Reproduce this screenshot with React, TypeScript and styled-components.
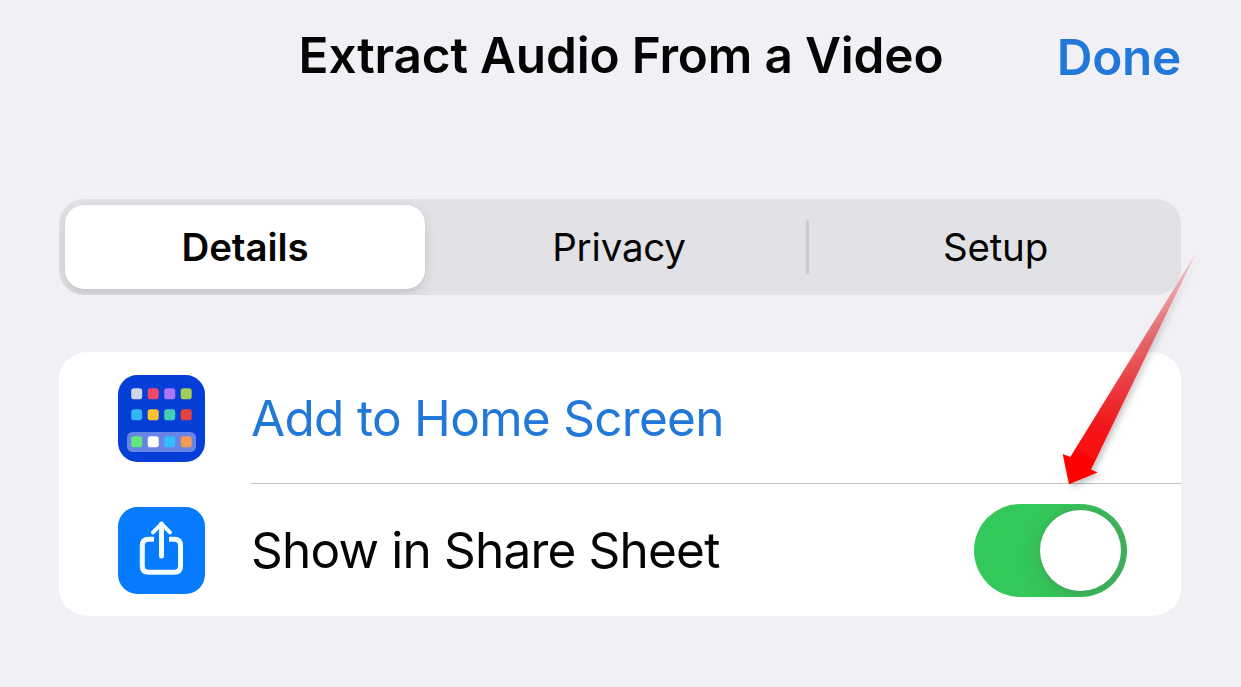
import React from 'react'
import styled, { createGlobalStyle } from 'styled-components'

const color = {
  background: '#f1f0f5',
  surface: '#ffffff',
  track: '#e2e1e6',
  separator: '#c2c2c4',
  text: '#050505',
  link: '#2278d8',
  green: '#34c759',
}

const GlobalStyle = createGlobalStyle`
  * {
    box-sizing: border-box;
  }

  body {
    margin: 0;
    background-color: ${color.background};
    font-family: Inter, 'Liberation Sans', sans-serif;
    color: ${color.text};
  }

  button {
    margin: 0;
    padding: 0;
    border: 0;
    background: none;
    font: inherit;
    color: inherit;
  }
`

const Wrapper = styled.div`
  position: relative;
  width: 1241px;
  height: 687px;
  padding: 0 60px 0 59px;
  background-color: ${color.background};
  overflow: hidden;
`

const Header = styled.header`
  display: grid;
  grid-template-columns: 200px 1fr 200px;
  align-items: center;
  height: 110px;
  margin-bottom: 89px;
  white-space: nowrap;
`

const Title = styled.h1`
  grid-column: 2;
  justify-self: center;
  margin: 0;
  padding-left: 2px;
  font-size: 49.5px;
  font-weight: 600;
  line-height: 60px;
  letter-spacing: -0.18px;
`

const DoneButton = styled.button`
  justify-self: end;
  padding-top: 4px;
  font-size: 49.5px;
  font-weight: 600;
  line-height: 60px;
  letter-spacing: -0.3px;
  color: ${color.link};
`

const Segments = styled.div`
  display: grid;
  grid-template-columns: 360px 388px 1fr;
  height: 96px;
  padding: 6px 3px 6px 6px;
  border-radius: 25px;
  background-color: ${color.track};
  overflow: hidden;
`

const Segment = styled.button<{ $selected?: boolean; $divided?: boolean }>`
  display: flex;
  justify-content: center;
  align-items: center;
  position: relative;
  border-radius: 19px;
  font-size: 38.5px;
  font-weight: ${({ $selected }) => ($selected ? 590 : 420)};
  letter-spacing: ${({ $selected }) => ($selected ? '-0.1px' : '-0.2px')};
  background-color: ${({ $selected }) => ($selected ? color.surface : 'transparent')};
  box-shadow: ${({ $selected }) =>
    $selected ? '0 4px 12px rgba(0, 0, 0, 0.12), 0 4px 2px rgba(0, 0, 0, 0.02)' : 'none'};

  &::after {
    content: '';
    display: ${({ $divided }) => ($divided ? 'block' : 'none')};
    position: absolute;
    top: 15px;
    right: 4px;
    width: 3px;
    height: 54px;
    border-radius: 2px;
    background-color: #cacace;
  }
`

const Card = styled.ul`
  margin: 57px 0 0;
  padding: 0;
  border-radius: 28px;
  background-color: ${color.surface};
  list-style: none;
`

const Row = styled.li`
  display: flex;
  align-items: center;
  height: 132px;
  padding-left: 59px;

  svg {
    flex: none;
  }
`

const RowBody = styled.div<{ $separator?: boolean }>`
  display: flex;
  justify-content: space-between;
  align-items: center;
  flex-grow: 1;
  height: 100%;
  margin-left: 46px;
  padding-right: 54px;
  border-bottom: ${({ $separator }) => ($separator ? `1px solid ${color.separator}` : '0')};
`

const Label = styled.span<{ $link?: boolean }>`
  font-size: 49.5px;
  font-weight: 420;
  line-height: 60px;
  letter-spacing: ${({ $link }) => ($link ? '-0.7px' : '-0.8px')};
  white-space: nowrap;
  color: ${({ $link }) => ($link ? color.link : color.text)};
`

const Toggle = styled.button`
  display: flex;
  justify-content: flex-end;
  width: 153px;
  height: 93px;
  padding: 6px;
  border-radius: 47px;
  background-color: ${color.green};
  overflow: hidden;
`

const Knob = styled.span`
  width: 81px;
  height: 81px;
  border-radius: 50%;
  background-color: ${color.surface};
  box-shadow: 0 6px 20px rgba(70, 70, 70, 0.16), 4px 0 5px 4px rgba(110, 110, 110, 0.2);
`

const Pointer = styled.svg`
  position: absolute;
  top: 240px;
  left: 1040px;
  pointer-events: none;
`

const apps = [
  ['#d2d6ea', '#ed4a6b', '#ad75fb', '#a4cf57'],
  ['#31b5f5', '#fdc130', '#42cfb3', '#e6403f'],
  ['#62e878', '#ffffff', '#34bdfd', '#f49a55'],
]
const appRows = [14, 35, 62]

const HomeScreenIcon = () => (
  <svg width="87" height="87" viewBox="0 0 87 87">
    <rect width="87" height="87" rx="19.5" fill="#063fd8" />
    <rect x="9" y="57" width="69" height="20" rx="5.5" fill="#6685e4" />
    {apps.map((row, y) =>
      row.map((fill, x) => (
        <rect
          key={fill}
          x={13.2 + x * 16.5}
          y={appRows[y] - 0.8}
          width="11"
          height="11"
          rx="2.8"
          fill={fill}
        />
      ))
    )}
  </svg>
)

const ShareIcon = () => (
  <svg width="87" height="87" viewBox="0 0 87 87">
    <rect width="87" height="87" rx="19.5" fill="#067bff" />
    <g fill="none" stroke="#f2fcff" strokeWidth="5">
      <path d="M36 32.2H30.5Q24.3 32.2 24.3 38.4V59.1Q24.3 65.3 30.5 65.3H56.3Q62.5 65.3 62.5 59.1V38.4Q62.5 32.2 56.3 32.2H51" />
      <path d="M43.5 49V17" strokeLinecap="round" />
      <path d="M35 25.3L43.5 16.8L52 25.3" strokeWidth="4" strokeLinecap="round" strokeLinejoin="round" />
    </g>
  </svg>
)

const Arrow = () => (
  <Pointer width="201" height="260" viewBox="0 0 201 260">
    <defs>
      <linearGradient id="fade" gradientUnits="userSpaceOnUse" x1="155" y1="16" x2="36" y2="232">
        <stop offset="0" stopColor="#df2a30" stopOpacity="0.2" />
        <stop offset="0.4" stopColor="#e22329" stopOpacity="0.65" />
        <stop offset="0.75" stopColor="#ef1417" stopOpacity="0.95" />
        <stop offset="1" stopColor="#ff0000" />
      </linearGradient>
      <filter id="shadow" x="-20%" y="-20%" width="140%" height="140%">
        <feDropShadow dx="2.5" dy="2.5" stdDeviation="3" floodColor="#000" floodOpacity="0.26" />
      </filter>
    </defs>
    <path
      d="M156 13L51 229.5L57.5 232.5L29 244.3L22.7 214L30.3 217Z"
      fill="url(#fade)"
      filter="url(#shadow)"
    />
  </Pointer>
)

const App = () => (
  <>
    <GlobalStyle />
    <Wrapper>
      <Header>
        <Title>Extract Audio From a Video</Title>
        <DoneButton>Done</DoneButton>
      </Header>

      <Segments>
        <Segment $selected>Details</Segment>
        <Segment $divided>Privacy</Segment>
        <Segment>Setup</Segment>
      </Segments>

      <Card>
        <Row>
          <HomeScreenIcon />
          <RowBody $separator>
            <Label $link>Add to Home Screen</Label>
          </RowBody>
        </Row>
        <Row>
          <ShareIcon />
          <RowBody>
            <Label>Show in Share Sheet</Label>
            <Toggle role="switch" aria-checked="true" aria-label="Show in Share Sheet">
              <Knob />
            </Toggle>
          </RowBody>
        </Row>
      </Card>

      <Arrow />
    </Wrapper>
  </>
)

export default App
